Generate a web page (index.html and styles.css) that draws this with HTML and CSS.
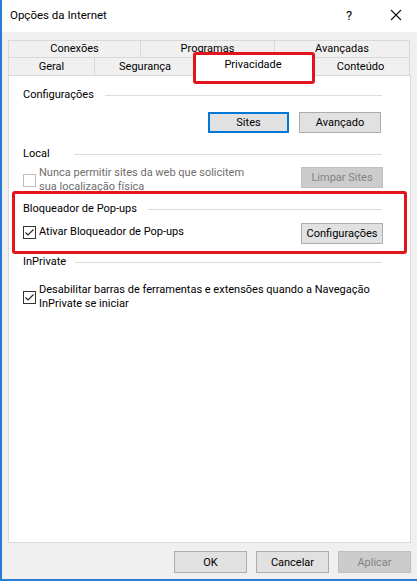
FILE: index.html
```html
<!DOCTYPE html>
<html lang="pt">
<head>
<meta charset="utf-8">
<title>Opções da Internet</title>
<link rel="stylesheet" href="styles.css">
</head>
<body>
<div class="window">
  <div class="titlebar">
    <span class="title">Opções da Internet</span>
    <span class="help">?</span>
    <span class="close"><svg width="12" height="12" viewBox="0 0 12 12"><path d="M1 1L11 11M11 1L1 11" stroke="#111" stroke-width="1.1" fill="none"/></svg></span>
  </div>
  <div class="content">
    <div class="tabs">
      <div class="tabrow row1">
        <div class="tab t-con">Conexões</div>
        <div class="tab t-pro">Programas</div>
        <div class="tab t-ava">Avançadas</div>
      </div>
      <div class="tabrow row2">
        <div class="tab t-ger">Geral</div>
        <div class="tab t-seg">Segurança</div>
        <div class="tab t-pri selected">Privacidade</div>
        <div class="tab t-cnt">Conteúdo</div>
      </div>
    </div>
    <div class="panel">
      <div class="legend"><span>Configurações</span><span class="rule"></span></div>
      <div class="btnrow">
        <button class="btn default w-sites">Sites</button>
        <button class="btn w-adv">Avançado</button>
      </div>

      <div class="legend g-local"><span>Local</span><span class="rule rule-wide"></span></div>
      <div class="optrow r-local">
        <label class="check disabled">
          <span class="box"></span>
          <span class="ctext">Nunca permitir sites da web que solicitem<br>sua localização física</span>
        </label>
        <button class="btn disabled w-side" disabled>Limpar Sites</button>
      </div>

      <div class="legend g-popup"><span>Bloqueador de Pop-ups</span><span class="rule"></span></div>
      <div class="optrow r-popup">
        <label class="check">
          <span class="box"><svg width="11" height="11" viewBox="0 0 11 11"><path d="M1.5 5.5L4 8L9.5 2.5" stroke="#222" stroke-width="1.1" fill="none"/></svg></span>
          <span class="ctext">Ativar Bloqueador de Pop-ups</span>
        </label>
        <button class="btn w-side">Configurações</button>
      </div>

      <div class="legend g-inprivate"><span>InPrivate</span><span class="rule rule-narrow"></span></div>
      <div class="optrow r-inprivate">
        <label class="check">
          <span class="box"><svg width="11" height="11" viewBox="0 0 11 11"><path d="M1.5 5.5L4 8L9.5 2.5" stroke="#222" stroke-width="1.1" fill="none"/></svg></span>
          <span class="ctext">Desabilitar barras de ferramentas e extensões quando a Navegação<br>InPrivate se iniciar</span>
        </label>
      </div>
    </div>
    <div class="footer">
      <button class="btn w-foot">OK</button>
      <button class="btn w-foot">Cancelar</button>
      <button class="btn w-foot disabled" disabled>Aplicar</button>
    </div>
  </div>
  <div class="hl hl-tab"></div>
  <div class="hl hl-popup"></div>
</div>
</body>
</html>
```
FILE: styles.css
```css
html, body {
  margin: 0;
  padding: 0;
  width: 417px;
  height: 581px;
  overflow: hidden;
  background: #f0f0f0;
}
body {
  font-family: Roboto, "Noto Sans", sans-serif;
  font-size: 11px;
  color: #000;
}
.window {
  position: relative;
  box-sizing: border-box;
  width: 417px;
  height: 581px;
  background: #f0f0f0;
  border-left: 2px solid #2a7bd2;
  border-bottom: 2px solid #2a7bd2;
}
.titlebar {
  height: 32px;
  background: #fff;
  display: flex;
  align-items: center;
  padding-bottom: 2px;
  box-sizing: border-box;
}
.title {
  margin-left: 8px;
  flex: 1;
  font-size: 11.5px;
}
.help {
  width: 14px;
  text-align: center;
  font-size: 13px;
  margin-right: 34px;
}
.close {
  display: flex;
  width: 12px;
  height: 12px;
  margin-right: 15px;
}
.content {
  padding: 8px 6px 0 6px;
}
.tabrow {
  display: flex;
}
.row1 { height: 17px; }
.row2 { height: 18px; align-items: flex-end; }
.tab {
  box-sizing: border-box;
  border-top: 1px solid #d9d9d9;
  border-left: 1px solid #d9d9d9;
  text-align: center;
  line-height: 16px;
  background: #f0f0f0;
  white-space: nowrap;
}
.row1 .tab { height: 17px; }
.row2 .tab { height: 18px; line-height: 17px; }
.tab:last-child { border-right: 1px solid #d9d9d9; }
.t-con { width: 132px; }
.t-pro { width: 134px; }
.t-ava { width: 136px; }
.t-ger { width: 86px; }
.t-seg { width: 101px; }
.t-pri { width: 116px; }
.t-cnt { width: 99px; }
.row2 .tab.selected {
  position: relative;
  z-index: 1;
  width: 120px;
  height: 22px;
  margin: 0 -2px -1px -2px;
  padding-top: 2px;
  background: #fff;
  border-right: 1px solid #d9d9d9;
  line-height: 16px;
}
.panel {
  box-sizing: border-box;
  height: 468px;
  background: #fff;
  border: 1px solid #d9d9d9;
  padding: 11px 28px 0 14px;
}
.legend {
  display: flex;
  align-items: center;
  height: 16px;
  line-height: 16px;
  white-space: nowrap;
}
.rule {
  flex: 1;
  height: 1px;
  background: #dcdcdc;
  margin-left: 11px;
}
.rule-wide { margin-left: 24px; }
.rule-narrow { margin-left: 9px; }
.btnrow {
  margin-top: 9px;
  display: flex;
  justify-content: flex-end;
  gap: 10px;
  padding-right: 1px;
}
.btn {
  box-sizing: border-box;
  height: 21px;
  padding: 0;
  font-family: inherit;
  font-size: 11px;
  color: #000;
  background: #e1e1e1;
  border: 1px solid #adadad;
  border-radius: 0;
  white-space: nowrap;
}
.btn.default {
  border-color: #0078d7;
  box-shadow: inset 0 0 0 1px #0078d7;
}
.btn.disabled {
  background: #cccccc;
  border-color: #bfbfbf;
  color: #838383;
}
.w-sites { width: 81px; }
.w-adv { width: 82px; }
.w-side { width: 82px; margin-right: -1px; }
.g-local { margin-top: 13px; }
.g-popup { margin-top: 7px; }
.g-inprivate { margin-top: 10px; }
.optrow {
  display: flex;
  justify-content: space-between;
  align-items: flex-start;
}
.r-local { margin-top: 4px; }
.r-local .btn { margin-top: 1px; }
.r-popup { margin-top: 6px; }
.r-popup .check { margin-top: 2px; }
.r-inprivate { margin-top: 13px; }
.check {
  display: flex;
  align-items: center;
  gap: 3px;
}
.ctext {
  line-height: 14px;
  white-space: nowrap;
}
.box {
  box-sizing: border-box;
  width: 13px;
  height: 13px;
  border: 1px solid #333;
  background: #fff;
  display: flex;
  align-items: center;
  justify-content: center;
  flex: none;
}
.check.disabled .box { border-color: #bcbcbc; }
.check.disabled .ctext { color: #6d6d6d; }
.footer {
  display: flex;
  justify-content: flex-end;
  gap: 9px;
  margin-top: 8px;
}
.w-foot { width: 73px; height: 22px; }
.hl {
  position: absolute;
  box-sizing: border-box;
  border: 3px solid #e3141b;
  border-radius: 3px;
  z-index: 5;
}
.hl-tab {
  left: 191px;
  top: 52px;
  width: 122px;
  height: 32px;
}
.hl-popup {
  left: 10px;
  top: 191px;
  width: 395px;
  height: 63px;
}
```
